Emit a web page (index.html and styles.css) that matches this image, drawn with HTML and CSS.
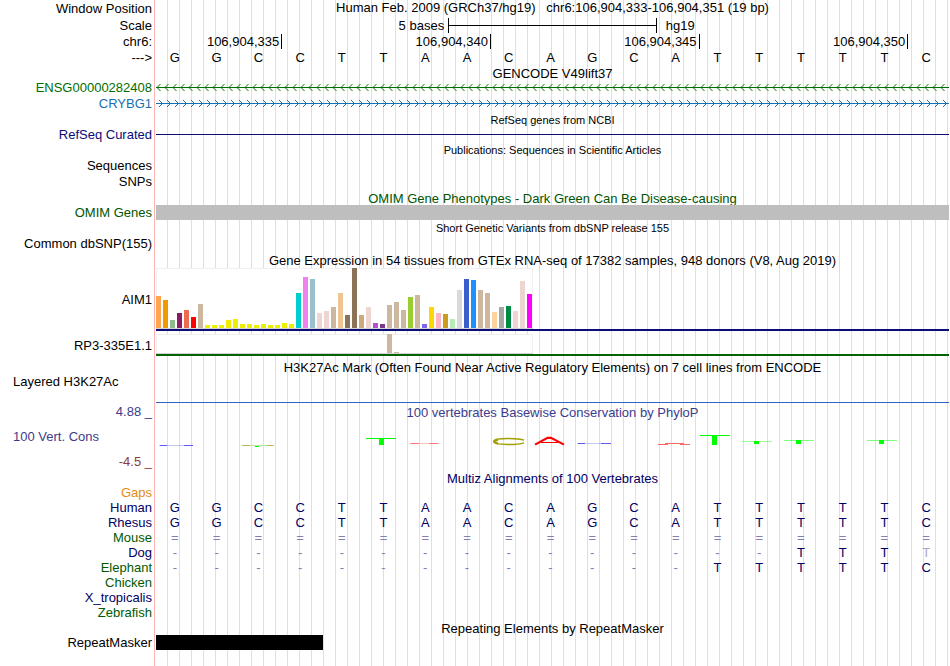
FILE: index.html
```html
<!DOCTYPE html>
<html lang="en">
<head>
    <meta charset="UTF-8">
    <meta name="viewport" content="width=device-width, initial-scale=1.0">
    <title>Human chr6:106,904,333-106,904,351</title>
    <link rel="stylesheet" href="styles.css">
</head>
<body>
    <main class="browser">
        <!-- Ruler -->
        <div class="row tall">
            <div class="label">Window Position</div>
            <h1 class="title position">Human Feb. 2009 (GRCh37/hg19) &nbsp; chr6:106,904,333-106,904,351 (19 bp)</h1>
        </div>
        <div class="row tall">
            <div class="label">Scale</div>
            <div class="bases">
                <span class="scale-size">5 bases</span>
                <span class="scale-bar"></span>
                <span class="scale-db">hg19</span>
            </div>
        </div>
        <div class="row medium">
            <div class="label">chr6:</div>
            <div class="bases">
                <span class="tick first">106,904,335</span>
                <span class="tick">106,904,340</span>
                <span class="tick">106,904,345</span>
                <span class="tick">106,904,350</span>
            </div>
        </div>
        <div class="row">
            <div class="label">---&gt;</div>
            <div class="bases" data-seq="GGCCTTAACAGCATTTTTC"></div>
        </div>

        <!-- Genes -->
        <div class="row"><h2 class="title">GENCODE V49lift37</h2></div>
        <div class="row medium ensg">
            <div class="label">ENSG00000282408</div>
            <svg class="strand" aria-hidden="true">
                <defs>
                    <pattern id="minus" width="8" height="15" patternUnits="userSpaceOnUse">
                        <path d="M0 7.5H8M4.5 4L1 7.5L4.5 11" fill="none" stroke="currentColor"/>
                    </pattern>
                </defs>
                <rect width="100%" height="15" fill="url(#minus)"/>
            </svg>
        </div>
        <div class="row medium crybg">
            <div class="label">CRYBG1</div>
            <svg class="strand" aria-hidden="true">
                <defs>
                    <pattern id="plus" width="8" height="15" patternUnits="userSpaceOnUse">
                        <path d="M0 7.5H8M3 4L6.5 7.5L3 11" fill="none" stroke="currentColor"/>
                    </pattern>
                </defs>
                <rect width="100%" height="15" fill="url(#plus)"/>
            </svg>
        </div>
        <div class="row"><h2 class="title small">RefSeq genes from NCBI</h2></div>
        <div class="row refseq">
            <div class="label">RefSeq Curated</div>
            <div class="body"><div class="line"></div></div>
        </div>

        <!-- Literature and phenotypes -->
        <div class="row medium"><h2 class="title small">Publications: Sequences in Scientific Articles</h2></div>
        <div class="row medium"><div class="label">Sequences</div></div>
        <div class="row medium"><div class="label">SNPs</div></div>
        <div class="row omim"><h2 class="title">OMIM Gene Phenotypes - Dark Green Can Be Disease-causing</h2></div>
        <div class="row omim">
            <div class="label">OMIM Genes</div>
            <div class="body"><div class="block gray"></div></div>
        </div>
        <div class="row medium"><h2 class="title small">Short Genetic Variants from dbSNP release 155</h2></div>
        <div class="row medium"><div class="label">Common dbSNP(155)</div></div>

        <!-- GTEx expression -->
        <div class="row medium"><h2 class="title">Gene Expression in 54 tissues from GTEx RNA-seq of 17382 samples, 948 donors (V8, Aug 2019)</h2></div>
        <div class="row">
            <div class="label">AIM1</div>
            <div class="body gtex aim"><div class="chart" id="aim1"></div></div>
        </div>
        <div class="row gap">
            <div class="label">RP3-335E1.1</div>
            <div class="body gtex rp3"><div class="chart" id="rp3"></div></div>
        </div>

        <!-- Regulation -->
        <div class="row gap"><h2 class="title">H3K27Ac Mark (Often Found Near Active Regulatory Elements) on 7 cell lines from ENCODE</h2></div>
        <div class="row histone">
            <div class="label left">Layered H3K27Ac</div>
            <div class="body signal"></div>
        </div>

        <!-- Conservation -->
        <div class="row phylop">
            <div class="limits">
                <div class="label">4.88 _</div>
                <div class="label left">100 Vert. Cons</div>
                <div class="label negative">-4.5 _</div>
            </div>
            <div>
                <h2 class="title">100 vertebrates Basewise Conservation by PhyloP</h2>
                <svg class="logo" viewBox="155 419 795 51" preserveAspectRatio="none" role="img" aria-label="PhyloP scores">
                    <g fill="none" stroke="#5a5af5">
                        <path d="M159 445.5H193M577 443.5H611" stroke-opacity=".35"/>
                        <path d="M160 445.5H167M184 445.5H193M578 443.5H585M601 443.5H611"/>
                    </g>
                    <g fill="none">
                        <path d="M241 445.5H274" stroke="#b4e6a0"/>
                        <path d="M243 445.5H250M267 445.5H273" stroke="#b9b44b"/>
                        <path d="M255 446.5H259" stroke="#00ff00"/>
                    </g>
                    <g fill="#00ff00">
                        <rect x="366" y="438" width="30" height="1"/>
                        <rect x="379" y="438" width="5" height="7"/>
                        <rect x="700" y="435" width="30" height="1"/>
                        <rect x="712" y="435" width="5" height="10"/>
                        <rect x="742" y="441" width="30" height="1" opacity=".4"/>
                        <rect x="754" y="441" width="5" height="3"/>
                        <rect x="784" y="440" width="30" height="1" opacity=".5"/>
                        <rect x="796" y="440" width="5" height="4"/>
                        <rect x="867" y="440" width="30" height="1" opacity=".5"/>
                        <rect x="879" y="440" width="5" height="4"/>
                    </g>
                    <g fill="none" stroke="#a0a000">
                        <path d="M524 440.2C520 438.4 514 438.5 508 438.5C499 438.5 494 439.6 494 441.6C494 443.6 499 444.5 508 444.5C515 444.5 520 444.4 524 442.8" stroke-width="1.3"/>
                        <path d="M498 439.5C493 441 493 442.2 498 443.6" stroke-width="2.4"/>
                    </g>
                    <g fill="none" stroke="#ff0000">
                        <path d="M535 444.6L547.5 437.8H551L564 444.6" stroke-width="2.2"/>
                        <path d="M541 442.5H558"/>
                    </g>
                    <g fill="none" stroke="#ff6464">
                        <path d="M409 443.5H440" stroke-opacity=".4"/>
                        <path d="M411 443.5H419M429 443.5H438" stroke-opacity=".8"/>
                        <path d="M658 444.5H668M680 444.5H690M665 443.5H684"/>
                    </g>
                </svg>
            </div>
        </div>
        <div class="row multiz"><h2 class="title">Multiz Alignments of 100 Vertebrates</h2></div>
        <div class="row gaps"><div class="label">Gaps</div></div>
        <div class="row multiz">
            <div class="label">Human</div>
            <div class="bases" data-seq="GGCCTTAACAGCATTTTTC"></div>
        </div>
        <div class="row multiz">
            <div class="label">Rhesus</div>
            <div class="bases" data-seq="GGCCTTAACAGCATTTTTC"></div>
        </div>
        <div class="row multiz alt">
            <div class="label">Mouse</div>
            <div class="bases" data-seq="==================="></div>
        </div>
        <div class="row multiz">
            <div class="label">Dog</div>
            <div class="bases" data-seq="---------------TTTt"></div>
        </div>
        <div class="row multiz alt">
            <div class="label">Elephant</div>
            <div class="bases" data-seq="-------------TTTTTC"></div>
        </div>
        <div class="row multiz alt"><div class="label">Chicken</div></div>
        <div class="row multiz"><div class="label">X_tropicalis</div></div>
        <div class="row multiz alt"><div class="label">Zebrafish</div></div>

        <!-- Repeats -->
        <div class="row"><h2 class="title">Repeating Elements by RepeatMasker</h2></div>
        <div class="row">
            <div class="label">RepeatMasker</div>
            <div class="bases"><div class="block repeat"></div></div>
        </div>
    </main>
    <script src="tracks.js"></script>
</body>
</html>
```

FILE: styles.css
```css
* {
    margin: 0;
    padding: 0;
    box-sizing: border-box;
}

body {
    font-family: "Liberation Sans", Arial, Helvetica, sans-serif;
    font-size: 13px;
    line-height: 15px;
    color: #000000;
    background: #ffffff;
}

/* Pink divider after the labels, then a guide line every 12px */
.browser {
    min-height: 100vh;
    background:
        linear-gradient(#ffb4b4, #ffb4b4) 154px 0 / 1px 100% no-repeat,
        linear-gradient(#ffffff, #ffffff) 0 0 / 156px 100% no-repeat,
        linear-gradient(to right, transparent 11px, #dcdcf5 11px) 156px 0 / 12px 100% repeat-x;
}

.row {
    display: grid;
    grid-template-columns: 155px 1fr;
    min-height: 15px;
    align-items: center;
}

.row.medium {
    min-height: 16px;
    align-items: start;
}

.row.tall {
    min-height: 17px;
}

.row.gap {
    padding-top: 3px;
}

.label {
    padding-right: 3px;
    text-align: right;
    white-space: nowrap;
}

.label.left {
    padding-left: 13px;
    text-align: left;
}

.title {
    grid-column: 2;
    padding-top: 2px;
    font-size: 13px;
    font-weight: normal;
    line-height: 13px;
    text-align: center;
    white-space: nowrap;
}

.title.position {
    align-self: start;
    padding-top: 0;
    line-height: 15px;
}

.title.small {
    font-size: 11px;
}

.body {
    padding: 0 1px;
}

/* One column per base in the window */
.bases {
    display: grid;
    grid-template-columns: repeat(19, 1fr);
    padding: 0 1px;
}

.base {
    padding-right: 4px;
    text-align: center;
}

.scale-size {
    grid-column: span 7;
    padding-right: 4px;
    text-align: right;
}

.scale-bar {
    grid-column: span 5;
    border: solid #000000;
    border-width: 0 1px;
    background: linear-gradient(#000000, #000000) center / 100% 1px no-repeat;
}

.scale-db {
    grid-column: span 7;
    padding-left: 9px;
}

.tick {
    grid-column: span 5;
    margin-right: -1px;
    padding-right: 2px;
    border-right: 1px solid #000000;
    text-align: right;
}

.tick.first {
    grid-column: span 3;
}

.strand {
    display: block;
    width: 100%;
    height: 15px;
    padding: 0 1px;
}

.ensg {
    color: #006e00;
}

.crybg {
    color: #1870b0;
}

.refseq {
    color: #0c0c78;
}

.omim {
    color: #005500;
}

.line {
    height: 1px;
    background: #0c0c78;
}

.block {
    height: 15px;
}

.gray {
    background: #bebebe;
}

.repeat {
    grid-column: span 4;
    background: #000000;
}

/* Expression bars */
.gtex::after {
    content: "";
    display: block;
    height: 2px;
}

.aim::after {
    background: #0c0c78;
}

.rp3::after {
    background: #006400;
}

.chart {
    display: flex;
    align-items: flex-end;
    gap: 2px;
    width: 377px;
    height: 61px;
    background: #ffffff;
    border-bottom: 1px solid #d2d2d2;
    box-shadow: inset 0 1px #f0f0f0, inset 1px 0 #f0f0f0, inset -1px 0 #f0f0f0;
}

.rp3 .chart {
    height: 20px;
}

.bar {
    width: 5px;
}

.histone {
    align-items: start;
}

.signal {
    height: 29px;
    margin: 0 1px;
    border-bottom: 1px solid #3264c8;
}

.phylop {
    align-items: stretch;
    padding-top: 1px;
    color: #3c3c8c;
}

.limits {
    display: flex;
    flex-direction: column;
    justify-content: space-between;
    padding-bottom: 1px;
}

.negative {
    color: #8c3c3c;
}

.logo {
    display: block;
    width: 100%;
    height: 51px;
}

.multiz {
    color: #000064;
}

.alt .label {
    color: #005a00;
}

.gaps {
    color: #e68a14;
}

.dim {
    color: #8080b4;
}

.faint {
    color: #a8a8cc;
}
```

FILE: tracks.js
```js
// Median expression per tissue: [colour, bar height]
const aim1 = [
    ['#ffa54f', 32], ['#ee9a00', 28], ['#8fbc8f', 8], ['#8b1c62', 15], ['#ee6a50', 18], ['#ff0000', 11],
    ['#cdb79e', 24], ['#eeee00', 3], ['#eeee00', 3], ['#eeee00', 3], ['#eeee00', 8], ['#eeee00', 9],
    ['#eeee00', 4], ['#eeee00', 4], ['#eeee00', 3], ['#eeee00', 4], ['#eeee00', 3], ['#eeee00', 3],
    ['#eeee00', 5], ['#eeee00', 4], ['#00cdcd', 35], ['#ee82ee', 51], ['#9ac0cd', 49], ['#eed5d2', 15],
    ['#eed5d2', 17], ['#cdb79e', 21], ['#eec591', 35], ['#8b7355', 13], ['#8b7355', 60], ['#cdaa7d', 13],
    ['#eed5d2', 21], ['#b452cd', 5], ['#7a378b', 4], ['#cdb79e', 23], ['#cdb79e', 26], ['#cdb79e', 18],
    ['#9acd32', 31], ['#cdb79e', 33], ['#7a67ee', 4], ['#ffd700', 21], ['#ffb6c1', 15], ['#cd9b1d', 14],
    ['#b4eeb4', 9], ['#d9d9d9', 38], ['#3a5fcd', 49], ['#1e90ff', 48], ['#cdb79e', 38], ['#cdb79e', 35],
    ['#ffd39b', 16], ['#a6a6a6', 21], ['#008b45', 22], ['#eed5d2', 17], ['#eed5d2', 47], ['#ff00ff', 34]
];

// RP3-335E1.1 is only expressed in two of the tissues
const rp3 = aim1.map(([color], i) => [color, i === 33 ? 19 : i === 34 ? 1 : 0]);

function drawBars(id, data) {
    const chart = document.getElementById(id);
    data.forEach(([color, height]) => {
        const bar = document.createElement('div');
        bar.className = 'bar';
        bar.style.height = height + 'px';
        bar.style.background = color;
        chart.appendChild(bar);
    });
}

drawBars('aim1', aim1);
drawBars('rp3', rp3);

// Spread each sequence over the base columns; lower case is a low quality base
document.querySelectorAll('[data-seq]').forEach((strip) => {
    [...strip.dataset.seq].forEach((letter) => {
        const base = document.createElement('span');
        base.className = 'base';
        if (letter === '=' || letter === '-') base.classList.add('dim');
        if (letter === 't') base.classList.add('faint');
        base.textContent = letter.toUpperCase();
        strip.appendChild(base);
    });
});
```
